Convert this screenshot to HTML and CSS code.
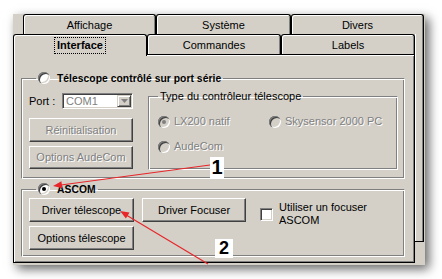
FILE: index.html
```html
<!DOCTYPE html>
<html>
<head>
<meta charset="utf-8">
<link rel="stylesheet" href="styles.css">
</head>
<body>
<div class="stage">
  <div class="dialog">
    <div class="tabs back">
      <div class="tab w1">Affichage</div>
      <div class="tab w2">Système</div>
      <div class="tab w3">Divers</div>
    </div>
    <div class="lower">
      <div class="main">
        <div class="tabs front">
          <div class="tab sel f1"><span class="focus">Interface</span></div>
          <div class="tab f2">Commandes</div>
          <div class="tab f3">Labels</div>
        </div>
        <div class="panel">
          <fieldset class="group g1">
            <legend class="outer-legend"><span class="radio"></span><b class="title">Télescope contrôlé sur port série</b></legend>
            <div class="g1-body">
              <div class="leftcol">
                <div class="portrow">
                  <span>Port :</span>
                  <div class="combo">
                    <span class="val">COM1</span>
                    <span class="drop"><svg width="7" height="4" viewBox="0 0 7 4"><polygon points="0,0 7,0 3.5,4" fill="#808080"/></svg></span>
                  </div>
                </div>
                <div class="btn dis b1">Réinitialisation</div>
                <div class="btn dis b2">Options AudeCom</div>
              </div>
              <fieldset class="group inner">
                <legend class="inner-legend">Type du contrôleur télescope</legend>
                <div class="opts">
                  <div class="opt"><span class="radio dis checked"></span>LX200 natif</div>
                  <div class="opt"><span class="radio dis"></span>Skysensor 2000 PC</div>
                  <div class="opt"><span class="radio dis"></span>AudeCom</div>
                </div>
              </fieldset>
            </div>
          </fieldset>
          <fieldset class="group g2">
            <legend class="outer-legend"><span class="radio checked"></span><b class="title">ASCOM</b></legend>
            <div class="g2-body">
              <div class="btn c-drv">Driver télescope</div>
              <div class="btn c-foc">Driver Focuser</div>
              <div class="chk-cell"><span class="checkbox"></span><span class="chk-text">Utiliser un focuser<br>ASCOM</span></div>
              <div class="btn c-opt">Options télescope</div>
            </div>
          </fieldset>
        </div>
      </div>
      <div class="strip"></div>
    </div>
    <div class="callout n1">1</div>
    <div class="callout n2">2</div>
  </div>
</div>
<svg class="arrows" width="442" height="279" viewBox="0 0 442 279">
  <line x1="210" y1="165" x2="61" y2="185" stroke="#e8262a" stroke-width="1.2"/>
  <polygon points="53,186 62.4,188.3 61.4,181.2" fill="#e8262a"/>
  <line x1="208" y1="264" x2="127" y2="215.5" stroke="#e8262a" stroke-width="1.2"/>
  <polygon points="120,211 129.5,212.6 125.9,218.6" fill="#e8262a"/>
</svg>
</body>
</html>
```

FILE: styles.css
```css
* { box-sizing: border-box; }

html, body {
  margin: 0;
  padding: 0;
  background: #fff;
}

body {
  width: 442px;
  height: 279px;
  overflow: hidden;
  position: relative;
  font-family: "Liberation Sans", Arial, sans-serif;
  font-size: 11px;
  line-height: 13px;
  color: #000;
}

.stage {
  padding: 13px 0 0 13px;
}

.dialog {
  position: relative;
  width: 412px;
  height: 251px;
  background: #d4d0c8;
  box-shadow: 4px 4px 10px rgba(0, 0, 0, 0.6);
}

/* ---- tabs ---- */
.tabs {
  display: flex;
  height: 20px;
}

.tabs.back {
  margin-top: 1px;
  padding-left: 10px;
}

.tab {
  height: 20px;
  border: 1px solid #000;
  border-bottom: 0;
  border-radius: 3px 3px 0 0;
  box-shadow: inset 1px 1px 0 #fff, inset -1px 0 0 #808080;
  background: #d4d0c8;
  display: flex;
  align-items: center;
  justify-content: center;
  padding-top: 1px;
}

.w1 { width: 133px; }
.w2 { width: 135px; }
.w3 { width: 133px; }

.f1 { width: 134px; }
.f2 { width: 134px; }
.f3 { width: 134px; }

.tab.sel {
  height: 22px;
  margin-bottom: -2px;
  position: relative;
  z-index: 1;
  box-shadow: inset 1px 1px 0 #fff;
  font-weight: bold;
  padding-top: 0;
  padding-bottom: 1px;
}

.focus {
  outline: 1px dotted #000;
  outline-offset: 1px;
  padding: 0 1px;
}

.lower {
  display: flex;
  align-items: flex-start;
}

.main {
  width: 402px;
}

.strip {
  width: 9px;
  height: 208px;
  border-right: 1px solid #000;
  border-bottom: 1px solid #000;
  box-shadow: inset 1px 0 0 #fff, inset -1px 0 0 #808080;
}

/* ---- panel ---- */
.panel {
  height: 209px;
  border: 1px solid #000;
  box-shadow: inset 1px 1px 0 #fff, inset -1px -1px 0 #808080;
  padding: 16px 0 0 7px;
}

.group {
  margin: 0;
  min-width: 0;
  border: 1px solid;
  border-color: #808080 #fff #fff #808080;
  box-shadow: inset 1px 1px 0 #fff, inset -1px -1px 0 #808080;
}

.outer-legend {
  display: flex;
  align-items: center;
  gap: 7px;
  height: 14px;
  margin-left: 7px;
  padding: 0 2px;
}

.title {
  font-size: 10.3px;
  letter-spacing: 0.05px;
}

.inner-legend {
  height: 13px;
  padding: 0 2px;
}

.g1 {
  width: 384px;
  height: 108px;
  padding: 0 0 0 7px;
}

.g1-body {
  display: flex;
  align-items: flex-start;
  padding-top: 8px;
}

.leftcol {
  width: 104px;
  display: flex;
  flex-direction: column;
}

.portrow {
  display: flex;
  align-items: center;
  justify-content: space-between;
  height: 16px;
}

.combo {
  width: 71px;
  height: 16px;
  border: 1px solid;
  border-color: #808080 #fff #fff #808080;
  box-shadow: inset 1px 1px 0 #404040, inset -1px -1px 0 #d4d0c8;
  background: #fff;
  display: flex;
  align-items: center;
  padding: 0 1px 0 3px;
}

.val {
  color: #808080;
}

.drop {
  margin-left: auto;
  width: 14px;
  height: 12px;
  background: #d4d0c8;
  border: 1px solid;
  border-color: #d4d0c8 #404040 #404040 #d4d0c8;
  box-shadow: inset 1px 1px 0 #fff, inset -1px -1px 0 #808080;
  display: flex;
  align-items: center;
  justify-content: center;
}

.btn {
  height: 24px;
  border: 1px solid;
  border-color: #fff #404040 #404040 #fff;
  box-shadow: inset -1px -1px 0 #808080;
  display: flex;
  align-items: center;
  justify-content: center;
  white-space: nowrap;
}

.btn.dis {
  color: #808080;
  text-shadow: 1px 1px 0 #fff;
}

.b1 { margin-top: 9px; }
.b2 { margin-top: 4px; height: 23px; }

.inner {
  width: 250px;
  height: 80px;
  margin-left: 15px;
  margin-top: -3px;
  padding: 0 0 0 9px;
}

.opts {
  display: grid;
  grid-template-columns: 111px auto;
  grid-auto-rows: 13px;
  row-gap: 12px;
  padding-top: 12px;
}

.opt {
  display: flex;
  align-items: center;
  gap: 4px;
  color: #808080;
  text-shadow: 1px 1px 0 #fff;
  white-space: nowrap;
}

/* ---- radio / checkbox ---- */
.radio {
  flex: none;
  position: relative;
  width: 12px;
  height: 12px;
  border-radius: 50%;
  background: #fff;
  box-shadow:
    inset 1px 1px 0 #808080,
    inset 2px 2px 0 #404040,
    inset -1px -1px 0 #fff,
    inset -2px -2px 0 #d4d0c8;
}

.radio.dis {
  background: #d4d0c8;
}

.radio.checked::after {
  content: "";
  position: absolute;
  left: 4px;
  top: 4px;
  width: 4px;
  height: 4px;
  border-radius: 50%;
  background: #000;
}

.radio.dis.checked::after {
  background: #808080;
}

.checkbox {
  flex: none;
  width: 13px;
  height: 13px;
  background: #fff;
  border: 1px solid;
  border-color: #808080 #fff #fff #808080;
  box-shadow: inset 1px 1px 0 #404040, inset -1px -1px 0 #d4d0c8;
}

/* ---- ASCOM group ---- */
.g2 {
  width: 384px;
  height: 75px;
  margin-top: 3px;
  padding: 0 0 0 7px;
}

.g2-body {
  display: grid;
  grid-template-columns: 105px 104px auto;
  grid-template-rows: 24px 24px;
  column-gap: 8px;
  row-gap: 4px;
  padding-top: 2px;
}

.c-drv { grid-column: 1; grid-row: 1; }
.c-foc { grid-column: 2; grid-row: 1; }
.c-opt { grid-column: 1; grid-row: 2; }

.chk-cell {
  grid-column: 3;
  grid-row: 1 / span 2;
  align-self: start;
  margin-top: 3px;
  margin-left: 6px;
  display: flex;
  align-items: center;
  gap: 6px;
}

/* ---- annotations ---- */
.callout {
  position: absolute;
  background: #fff;
  font-weight: bold;
  display: flex;
  align-items: center;
  justify-content: center;
  color: #000;
  z-index: 3;
}

.n1 {
  left: 197px;
  top: 143px;
  width: 14px;
  height: 21px;
  font-size: 20px;
  line-height: 21px;
}

.n2 {
  left: 202px;
  top: 225px;
  width: 18px;
  height: 19px;
  font-size: 18px;
  line-height: 19px;
}

.arrows {
  position: absolute;
  left: 0;
  top: 0;
  pointer-events: none;
  z-index: 5;
}
```
